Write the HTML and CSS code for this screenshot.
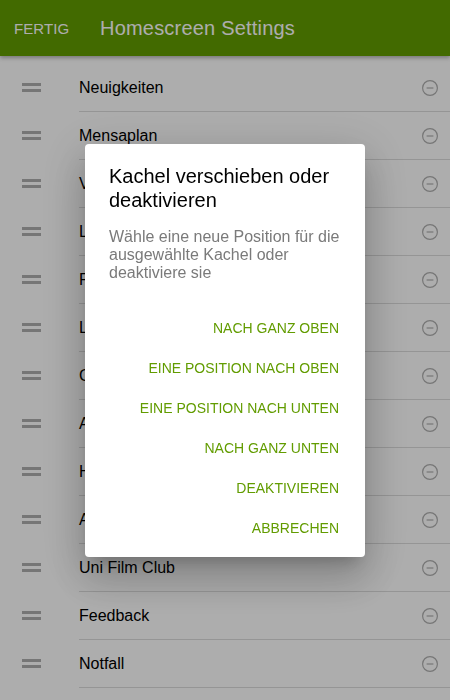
FILE: index.html
```html
<!DOCTYPE html>
<html lang="de">
<head>
<meta charset="utf-8">
<title>Homescreen Settings</title>
<link rel="stylesheet" href="styles.css">
</head>
<body>
<header class="appbar">
  <span class="appbar-action">FERTIG</span>
  <h1 class="appbar-title">Homescreen Settings</h1>
</header>
<ul class="tile-list">
  <li class="tile-row"><span class="handle"><i></i><i></i></span><span class="tile-main"><span class="tile-name">Neuigkeiten</span><svg class="remove" viewBox="0 0 18 18"><circle cx="9" cy="9" r="7.4"/><line x1="5.6" y1="9" x2="12.4" y2="9"/></svg></span></li>
  <li class="tile-row"><span class="handle"><i></i><i></i></span><span class="tile-main"><span class="tile-name">Mensaplan</span><svg class="remove" viewBox="0 0 18 18"><circle cx="9" cy="9" r="7.4"/><line x1="5.6" y1="9" x2="12.4" y2="9"/></svg></span></li>
  <li class="tile-row"><span class="handle"><i></i><i></i></span><span class="tile-main"><span class="tile-name">Vorlesungsverzeichnis</span><svg class="remove" viewBox="0 0 18 18"><circle cx="9" cy="9" r="7.4"/><line x1="5.6" y1="9" x2="12.4" y2="9"/></svg></span></li>
  <li class="tile-row"><span class="handle"><i></i><i></i></span><span class="tile-main"><span class="tile-name">Lageplan</span><svg class="remove" viewBox="0 0 18 18"><circle cx="9" cy="9" r="7.4"/><line x1="5.6" y1="9" x2="12.4" y2="9"/></svg></span></li>
  <li class="tile-row"><span class="handle"><i></i><i></i></span><span class="tile-main"><span class="tile-name">Freie Räume</span><svg class="remove" viewBox="0 0 18 18"><circle cx="9" cy="9" r="7.4"/><line x1="5.6" y1="9" x2="12.4" y2="9"/></svg></span></li>
  <li class="tile-row"><span class="handle"><i></i><i></i></span><span class="tile-main"><span class="tile-name">Links</span><svg class="remove" viewBox="0 0 18 18"><circle cx="9" cy="9" r="7.4"/><line x1="5.6" y1="9" x2="12.4" y2="9"/></svg></span></li>
  <li class="tile-row"><span class="handle"><i></i><i></i></span><span class="tile-main"><span class="tile-name">Campus News</span><svg class="remove" viewBox="0 0 18 18"><circle cx="9" cy="9" r="7.4"/><line x1="5.6" y1="9" x2="12.4" y2="9"/></svg></span></li>
  <li class="tile-row"><span class="handle"><i></i><i></i></span><span class="tile-main"><span class="tile-name">Abfahrten</span><svg class="remove" viewBox="0 0 18 18"><circle cx="9" cy="9" r="7.4"/><line x1="5.6" y1="9" x2="12.4" y2="9"/></svg></span></li>
  <li class="tile-row"><span class="handle"><i></i><i></i></span><span class="tile-main"><span class="tile-name">Hochschulsport</span><svg class="remove" viewBox="0 0 18 18"><circle cx="9" cy="9" r="7.4"/><line x1="5.6" y1="9" x2="12.4" y2="9"/></svg></span></li>
  <li class="tile-row"><span class="handle"><i></i><i></i></span><span class="tile-main"><span class="tile-name">AStA</span><svg class="remove" viewBox="0 0 18 18"><circle cx="9" cy="9" r="7.4"/><line x1="5.6" y1="9" x2="12.4" y2="9"/></svg></span></li>
  <li class="tile-row"><span class="handle"><i></i><i></i></span><span class="tile-main"><span class="tile-name">Uni Film Club</span><svg class="remove" viewBox="0 0 18 18"><circle cx="9" cy="9" r="7.4"/><line x1="5.6" y1="9" x2="12.4" y2="9"/></svg></span></li>
  <li class="tile-row"><span class="handle"><i></i><i></i></span><span class="tile-main"><span class="tile-name">Feedback</span><svg class="remove" viewBox="0 0 18 18"><circle cx="9" cy="9" r="7.4"/><line x1="5.6" y1="9" x2="12.4" y2="9"/></svg></span></li>
  <li class="tile-row"><span class="handle"><i></i><i></i></span><span class="tile-main"><span class="tile-name">Notfall</span><svg class="remove" viewBox="0 0 18 18"><circle cx="9" cy="9" r="7.4"/><line x1="5.6" y1="9" x2="12.4" y2="9"/></svg></span></li>
</ul>

<div class="scrim">
  <div class="dialog" role="dialog">
    <h2 class="dialog-title">Kachel verschieben oder deaktivieren</h2>
    <p class="dialog-body">Wähle eine neue Position für die ausgewählte Kachel oder deaktiviere sie</p>
    <div class="dialog-actions">
      <button class="dialog-btn">NACH GANZ OBEN</button>
      <button class="dialog-btn">EINE POSITION NACH OBEN</button>
      <button class="dialog-btn">EINE POSITION NACH UNTEN</button>
      <button class="dialog-btn">NACH GANZ UNTEN</button>
      <button class="dialog-btn">DEAKTIVIEREN</button>
      <button class="dialog-btn">ABBRECHEN</button>
    </div>
  </div>
</div>
</body>
</html>
```

FILE: styles.css
```css
* { box-sizing: border-box; }

html, body {
  margin: 0;
  padding: 0;
  background: #ffffff;
  font-family: "Liberation Sans", Arial, sans-serif;
}

.appbar {
  position: relative;
  z-index: 2;
  height: 56px;
  background: #629c00;
  display: flex;
  align-items: center;
  padding-left: 14px;
  box-shadow: 0 2px 4px rgba(0, 0, 0, 0.3);
  color: #ffffff;
}

.appbar-action {
  font-size: 15px;
  letter-spacing: 0.1px;
  width: 86px;
  flex: none;
}

.appbar-title {
  margin: 0;
  font-size: 20px;
  font-weight: normal;
  letter-spacing: 0.2px;
}

.tile-list {
  list-style: none;
  margin: 0;
  padding: 8px 0 0;
}

.tile-row {
  height: 48px;
  display: flex;
  align-items: stretch;
}

.handle {
  width: 79px;
  flex: none;
  display: flex;
  flex-direction: column;
  justify-content: center;
  gap: 3px;
  padding-left: 22px;
  padding-bottom: 1px;
}

.handle i {
  display: block;
  width: 19px;
  height: 3px;
  background: #aeaeae;
}

.tile-main {
  flex: 1;
  display: flex;
  align-items: center;
  border-bottom: 1px solid #dcdcdc;
  padding-right: 11px;
}

.tile-name {
  flex: 1;
  font-size: 16px;
  color: #000000;
  white-space: nowrap;
}

.remove {
  width: 18px;
  height: 18px;
  fill: none;
  stroke: #aeaeae;
  stroke-width: 1.2;
}

.scrim {
  position: fixed;
  inset: 0;
  z-index: 10;
  background: rgba(0, 0, 0, 0.32);
  display: flex;
  align-items: center;
  justify-content: center;
}

.dialog {
  width: 280px;
  background: #ffffff;
  border-radius: 4px;
  padding: 20px 0 9px;
  box-shadow: 0 11px 15px -7px rgba(0, 0, 0, 0.2),
              0 24px 38px 3px rgba(0, 0, 0, 0.14),
              0 9px 46px 8px rgba(0, 0, 0, 0.12);
}

.dialog-title {
  margin: 0;
  padding: 0 24px;
  font-size: 20px;
  line-height: 24px;
  font-weight: normal;
  color: #000000;
}

.dialog-body {
  margin: 16px 0 0;
  padding: 0 24px;
  font-size: 16px;
  line-height: 18px;
  color: #7a7a7a;
}

.dialog-actions {
  margin-top: 26px;
  display: flex;
  flex-direction: column;
  align-items: stretch;
}

.dialog-btn {
  height: 40px;
  border: 0;
  background: transparent;
  padding: 0 26px 0 0;
  text-align: right;
  font-family: "Liberation Sans", Arial, sans-serif;
  font-size: 14px;
  color: #629c00;
}
```
